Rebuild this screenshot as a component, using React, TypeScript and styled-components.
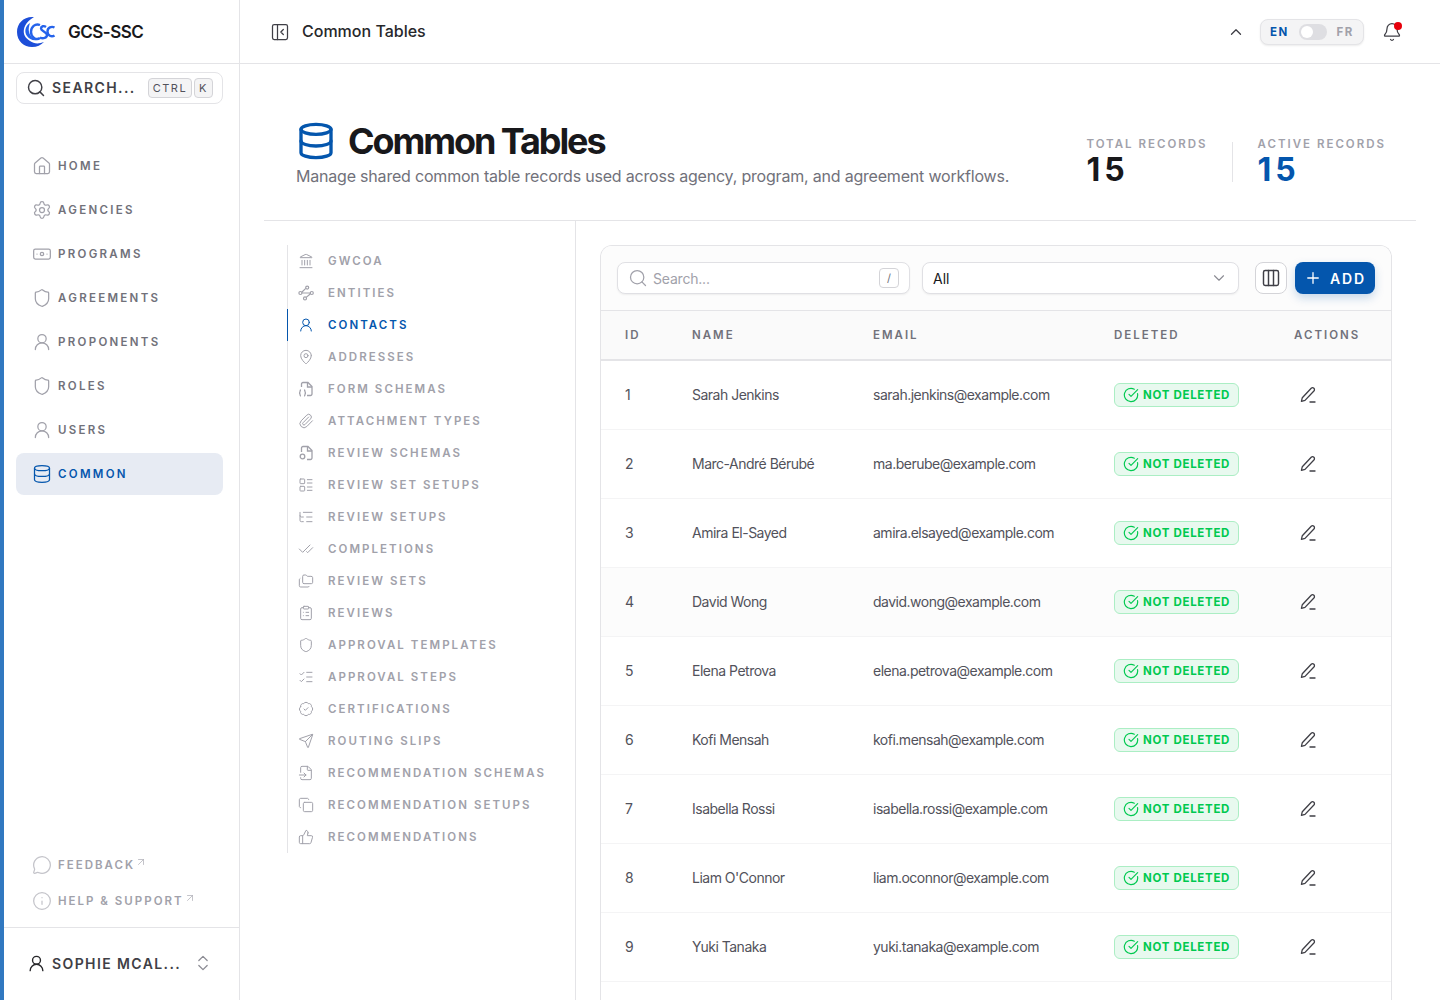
import React from "react";
import styled, { createGlobalStyle } from "styled-components";
import {
  Search,
  House,
  Settings,
  Banknote,
  Shield,
  UserRound,
  Database,
  MessageCircle,
  Info,
  ArrowUpRight,
  ChevronsUpDown,
  ChevronUp,
  ChevronDown,
  Bell,
  Landmark,
  MapPin,
  Paperclip,
  LayoutList,
  ListTree,
  CheckCheck,
  Folders,
  ClipboardList,
  ListChecks,
  BadgeCheck,
  Send,
  FileInput,
  Copy,
  ThumbsUp,
  Columns3,
  Plus,
  CircleCheckBig,
  PanelLeftClose,
} from "lucide-react";

const BLUE = "#0456ad";

const GlobalStyle = createGlobalStyle`
  html, body {
    margin: 0;
    padding: 0;
    height: 1000px;
    overflow: hidden;
    background: #fff;
    font-family: Inter, "Liberation Sans", sans-serif;
    color: #18181b;
  }
  * { box-sizing: border-box; }
`;

const Shell = styled.div`
  display: flex;
  width: 1440px;
  height: 1000px;
  overflow: hidden;
`;

const Sidebar = styled.aside`
  width: 240px;
  flex: none;
  height: 1000px;
  display: flex;
  flex-direction: column;
  border-left: 4px solid #3178c0;
  border-right: 1px solid #e4e4e7;
`;

const Brand = styled.div`
  height: 64px;
  flex: none;
  display: flex;
  align-items: center;
  gap: 12px;
  padding-left: 12px;
  border-bottom: 1px solid #e4e4e7;
`;

const BrandName = styled.span`
  font-size: 17px;
  font-weight: 600;
  letter-spacing: -0.5px;
  color: #18181b;
`;

const SearchBox = styled.div`
  margin: 8px 16px 0 12px;
  height: 32px;
  flex: none;
  display: flex;
  align-items: center;
  padding: 0 9px;
  border: 1px solid #e4e4e7;
  border-radius: 8px;
  color: #3f3f46;
`;

const SearchLabel = styled.span`
  margin: 0 0 2px 6px;
  flex: 1;
  font-size: 14px;
  font-weight: 600;
  letter-spacing: 1.4px;
  color: #3f3f46;
`;

const Kbd = styled.span`
  height: 20px;
  display: inline-flex;
  align-items: center;
  padding: 0 4px;
  margin-left: 2px;
  border: 1px solid #d4d4d8;
  border-radius: 4px;
  background: #f4f4f5;
  font-size: 11px;
  letter-spacing: 1.5px;
  color: #52525b;
`;

const Nav = styled.nav`
  margin: 41px 16px 0 12px;
  display: flex;
  flex-direction: column;
  gap: 2px;
`;

const NavItem = styled.div<{ $active?: boolean }>`
  height: 42px;
  display: flex;
  align-items: center;
  gap: 6px;
  padding-left: 16px;
  border-radius: 8px;
  background: ${(p) => (p.$active ? "#e7ebf3" : "transparent")};
  color: ${(p) => (p.$active ? BLUE : "#a1a1aa")};
`;

const NavLabel = styled.span<{ $active?: boolean }>`
  font-size: 11.5px;
  font-weight: 600;
  letter-spacing: 2.3px;
  color: ${(p) => (p.$active ? BLUE : "#71717a")};
`;

const SideFoot = styled.div`
  margin-top: auto;
  padding: 0 12px 10px 28px;
  display: flex;
  flex-direction: column;
  gap: 4px;
`;

const FootLink = styled.div`
  height: 32px;
  display: flex;
  align-items: center;
  gap: 6px;
  color: #c4c4ca;
`;

const FootLabel = styled.span`
  font-size: 11.5px;
  font-weight: 600;
  letter-spacing: 2px;
  color: #a1a1aa;
`;

const FootArrow = styled.span`
  display: inline-flex;
  margin: -6px 0 0 -6px;
  color: #a1a1aa;
`;

const UserRow = styled.div`
  height: 73px;
  flex: none;
  display: flex;
  align-items: center;
  padding: 0 0 2px 23px;
  border-top: 1px solid #e4e4e7;
  color: #27272a;
`;

const UserName = styled.span`
  margin-left: 6px;
  width: 141px;
  font-size: 14px;
  font-weight: 600;
  letter-spacing: 1.4px;
  white-space: nowrap;
  color: #3f3f46;
`;

const Main = styled.main`
  flex: 1;
  min-width: 0;
  height: 1000px;
  display: flex;
  flex-direction: column;
`;

const TopBar = styled.header`
  height: 64px;
  flex: none;
  display: flex;
  align-items: center;
  padding: 0 38px 0 30px;
  border-bottom: 1px solid #e4e4e7;
  color: #3f3f46;
`;

const TopTitle = styled.span`
  margin: 0 0 2px 12px;
  flex: 1;
  font-size: 16px;
  font-weight: 500;
  color: #27272a;
`;

const LangSwitch = styled.div`
  margin: 0 18px 0 15px;
  width: 104px;
  height: 26px;
  display: flex;
  align-items: center;
  justify-content: space-between;
  padding: 0 9px;
  border: 1px solid #e4e4e7;
  border-radius: 8px;
  background: #f4f4f5;
  box-shadow: 0 1px 2px rgba(0, 0, 0, 0.08);
`;

const LangText = styled.span<{ $on?: boolean }>`
  font-size: 11.5px;
  font-weight: 700;
  letter-spacing: 1.6px;
  color: ${(p) => (p.$on ? BLUE : "#a1a1aa")};
`;

const Track = styled.span`
  width: 28px;
  height: 16px;
  padding: 2px;
  border-radius: 8px;
  background: #dedee2;
  display: flex;
`;

const Knob = styled.span`
  width: 12px;
  height: 12px;
  border-radius: 50%;
  background: #fff;
`;

const BellWrap = styled.span`
  position: relative;
  display: inline-flex;
  color: #3f3f46;
`;

const BellDot = styled.span`
  position: absolute;
  top: 0;
  right: 0;
  width: 8px;
  height: 8px;
  border-radius: 50%;
  background: #e7000b;
`;

const Content = styled.div`
  flex: 1;
  min-height: 0;
  padding: 0 24px;
  display: flex;
  flex-direction: column;
`;

const PageHead = styled.section`
  height: 157px;
  flex: none;
  display: flex;
  align-items: center;
  justify-content: space-between;
  padding: 25px 30px 0 32px;
  border-bottom: 1px solid #e4e4e7;
`;

const TitleRow = styled.div`
  display: flex;
  align-items: center;
  gap: 12px;
  color: ${BLUE};
`;

const Title = styled.h1`
  margin: 0;
  font-size: 36px;
  line-height: 40px;
  font-weight: 700;
  letter-spacing: -2.1px;
  color: #18181b;
`;

const Subtitle = styled.p`
  margin: 3px 0 0;
  font-size: 16px;
  line-height: 24px;
  letter-spacing: -0.2px;
  color: #71717a;
`;

const Stats = styled.div`
  margin-top: 14px;
  display: flex;
  align-items: center;
`;

const StatDivider = styled.span`
  width: 1px;
  height: 40px;
  margin: 0 25px 0 24px;
  background: #e4e4e7;
`;

const StatLabel = styled.div`
  font-size: 11.5px;
  line-height: 14px;
  font-weight: 600;
  letter-spacing: 2px;
  color: #a1a1aa;
`;

const StatValue = styled.div<{ $blue?: boolean }>`
  margin-top: 3px;
  font-size: 32px;
  line-height: 32px;
  font-weight: 700;
  letter-spacing: 4px;
  color: ${(p) => (p.$blue ? BLUE : "#18181b")};
`;

const Body = styled.div`
  flex: 1;
  min-height: 0;
  display: flex;
`;

const SubCol = styled.div`
  width: 312px;
  flex: none;
  padding: 24px 0 0 23px;
  border-right: 1px solid #e4e4e7;
`;

const SubList = styled.div`
  border-left: 1px solid #e4e4e7;
  display: flex;
  flex-direction: column;
`;

const SubItem = styled.div<{ $active?: boolean }>`
  height: 32px;
  display: flex;
  align-items: center;
  gap: 14px;
  padding-left: 10px;
  margin-left: -1px;
  border-left: 1px solid ${(p) => (p.$active ? BLUE : "transparent")};
  color: ${(p) => (p.$active ? BLUE : "#a1a1aa")};
`;

const SubLabel = styled.span<{ $active?: boolean }>`
  font-size: 11.5px;
  font-weight: 600;
  letter-spacing: 2.05px;
  color: ${(p) => (p.$active ? BLUE : "#a1a1aa")};
`;

const TableArea = styled.div`
  flex: 1;
  min-width: 0;
  padding: 24px 24px 0 24px;
`;

const Card = styled.div`
  height: 800px;
  border: 1px solid #e4e4e7;
  border-bottom: none;
  border-radius: 12px 12px 0 0;
  overflow: hidden;
`;

const Toolbar = styled.div`
  height: 65px;
  display: flex;
  align-items: center;
  gap: 12px;
  padding: 0 16px;
  background: #fcfcfc;
  border-bottom: 1px solid #e4e4e7;
`;

const Field = styled.div`
  height: 32px;
  display: flex;
  align-items: center;
  padding: 0 10px;
  background: #fff;
  border: 1px solid #e0e0e4;
  border-radius: 8px;
  box-shadow: 0 1px 2px rgba(0, 0, 0, 0.06);
`;

const SearchField = styled(Field)`
  width: 293px;
  color: #a1a1aa;
`;

const Placeholder = styled.span`
  margin-left: 5px;
  flex: 1;
  font-size: 14px;
  letter-spacing: -0.2px;
  color: #a1a1aa;
`;

const SlashKey = styled.span`
  width: 20px;
  height: 20px;
  display: flex;
  align-items: center;
  justify-content: center;
  border: 1px solid #d4d4d8;
  border-radius: 4px;
  font-size: 11px;
  color: #71717a;
`;

const SelectField = styled(Field)`
  width: 317px;
  justify-content: space-between;
  font-size: 14px;
  color: #18181b;
  padding-right: 10px;
  svg {
    color: #8b8b93;
  }
`;

const ColumnsButton = styled.button`
  margin-left: 4px;
  width: 32px;
  height: 32px;
  display: flex;
  align-items: center;
  justify-content: center;
  padding: 0;
  background: #fff;
  border: 1px solid #d4d4d8;
  border-radius: 8px;
  color: #3f3f46;
`;

const AddButton = styled.button`
  margin-left: -4px;
  width: 80px;
  height: 32px;
  display: flex;
  align-items: center;
  justify-content: center;
  gap: 8px;
  padding: 0;
  border: none;
  border-radius: 8px;
  background: ${BLUE};
  color: #fff;
  font-family: inherit;
  font-size: 14px;
  font-weight: 600;
  letter-spacing: 1.8px;
  box-shadow: 0 4px 10px rgba(4, 86, 173, 0.22);
`;

const Table = styled.table`
  width: 100%;
  border-collapse: collapse;
  table-layout: fixed;
`;

const Th = styled.th<{ $w: number }>`
  width: ${(p) => p.$w}px;
  height: 49px;
  padding: 0 0 0 24px;
  text-align: left;
  background: #fafafa;
  border-bottom: 2px solid #e4e4e7;
  font-size: 11.5px;
  font-weight: 600;
  letter-spacing: 2px;
  color: #71717a;
`;

const Td = styled.td`
  height: 69px;
  padding: 0 0 0 24px;
  border-bottom: 1px solid #f4f4f5;
  font-size: 14px;
  letter-spacing: -0.5px;
  color: #52525b;
`;

const Row = styled.tr<{ $hover?: boolean }>`
  background: ${(p) => (p.$hover ? "#fcfcfc" : "#fff")};
`;

const Badge = styled.span`
  height: 24px;
  display: inline-flex;
  align-items: center;
  vertical-align: middle;
  gap: 4px;
  padding: 0 8px;
  border: 1px solid #abeec4;
  border-radius: 6px;
  background: #e8f9ef;
  font-size: 11.5px;
  font-weight: 700;
  letter-spacing: 0.7px;
  color: #00c950;
  white-space: nowrap;
`;

const EditCell = styled.span`
  display: flex;
  margin-left: 5px;
  color: #3f3f46;
`;

// small drawings that the icon package has no close match for
const EntitiesIcon = ({ size = 16 }: { size?: number; strokeWidth?: number }) => (
  <svg width={size} height={size} viewBox="0 0 16 16" fill="none" stroke="currentColor" strokeWidth={1.2}>
    <circle cx="2.4" cy="8" r="1.5" />
    <circle cx="9.2" cy="2.6" r="1.5" />
    <circle cx="7" cy="13.4" r="1.5" />
    <circle cx="13.8" cy="8" r="1.5" />
    <path d="M3.9 8h8.4M7.8 3.4 4 7M8.2 12.4 12.2 9" />
  </svg>
);

const FileBracesIcon = ({ size = 16 }: { size?: number; strokeWidth?: number }) => (
  <svg width={size} height={size} viewBox="0 0 16 16" fill="none" stroke="currentColor" strokeWidth={1.3}>
    <path d="M3.500 6V3A1.500 1.500 0 0 1 5 1.500h5L14 5.500V13a1.500 1.500 0 0 1-1.500 1.500H9" />
    <path d="M9.500 1.500V6H14" />
    <path d="M3 9c-1 0-1 .7-1 1.500S1.500 12 1 12c.5 0 1 .5 1 1.500S2 15 3 15M6 9c1 0 1 .7 1 1.500s.5 1.500 1 1.500c-.5 0-1 .5-1 1.500S7 15 6 15" />
  </svg>
);

const FileDotIcon = ({ size = 16 }: { size?: number; strokeWidth?: number }) => (
  <svg width={size} height={size} viewBox="0 0 16 16" fill="none" stroke="currentColor" strokeWidth={1.3}>
    <path d="M3.500 7V3A1.500 1.500 0 0 1 5 1.500h5L14 5.500V13a1.500 1.500 0 0 1-1.500 1.500H9" />
    <path d="M9.500 1.500V6H14" />
    <circle cx="4.500" cy="11.500" r="2.300" />
  </svg>
);

const EditIcon = () => (
  <svg width="18" height="18" viewBox="0 0 18 18" fill="none" stroke="currentColor" strokeWidth={1.3} strokeLinejoin="round" strokeLinecap="round">
    <path d="M12.200 2.300a1.900 1.900 0 0 1 2.700 2.700L6 14.400l-3.600 1 .9-3.700z" />
    <path d="M11 16h5" />
  </svg>
);

const navItems = [
  { label: "HOME", icon: House },
  { label: "AGENCIES", icon: Settings },
  { label: "PROGRAMS", icon: Banknote },
  { label: "AGREEMENTS", icon: Shield },
  { label: "PROPONENTS", icon: UserRound },
  { label: "ROLES", icon: Shield },
  { label: "USERS", icon: UserRound },
  { label: "COMMON", icon: Database, active: true },
];

const subItems = [
  { label: "GWCOA", icon: Landmark },
  { label: "ENTITIES", icon: EntitiesIcon },
  { label: "CONTACTS", icon: UserRound, active: true },
  { label: "ADDRESSES", icon: MapPin },
  { label: "FORM SCHEMAS", icon: FileBracesIcon },
  { label: "ATTACHMENT TYPES", icon: Paperclip },
  { label: "REVIEW SCHEMAS", icon: FileDotIcon },
  { label: "REVIEW SET SETUPS", icon: LayoutList },
  { label: "REVIEW SETUPS", icon: ListTree },
  { label: "COMPLETIONS", icon: CheckCheck },
  { label: "REVIEW SETS", icon: Folders },
  { label: "REVIEWS", icon: ClipboardList },
  { label: "APPROVAL TEMPLATES", icon: Shield },
  { label: "APPROVAL STEPS", icon: ListChecks },
  { label: "CERTIFICATIONS", icon: BadgeCheck },
  { label: "ROUTING SLIPS", icon: Send },
  { label: "RECOMMENDATION SCHEMAS", icon: FileInput },
  { label: "RECOMMENDATION SETUPS", icon: Copy },
  { label: "RECOMMENDATIONS", icon: ThumbsUp },
];

const contacts = [
  { id: 1, name: "Sarah Jenkins", email: "sarah.jenkins@example.com" },
  { id: 2, name: "Marc-André Bérubé", email: "ma.berube@example.com" },
  { id: 3, name: "Amira El-Sayed", email: "amira.elsayed@example.com" },
  { id: 4, name: "David Wong", email: "david.wong@example.com" },
  { id: 5, name: "Elena Petrova", email: "elena.petrova@example.com" },
  { id: 6, name: "Kofi Mensah", email: "kofi.mensah@example.com" },
  { id: 7, name: "Isabella Rossi", email: "isabella.rossi@example.com" },
  { id: 8, name: "Liam O'Connor", email: "liam.oconnor@example.com" },
  { id: 9, name: "Yuki Tanaka", email: "yuki.tanaka@example.com" },
];

const Logo = () => (
  <svg width="40" height="32" viewBox="0 0 40 32" fill="none">
    <path
      d="M18 1C8 0 1 7 1 16c0 9 7 15 15 15 5 0 9-2 12-5-5 2-10 2-14-1C9 22 7 18 8 13c1-5 5-9 10-12z"
      fill="#1d4ed8"
    />
    <path d="M14 7C9 10 8 16 11 20c2 3 6 5 10 4-4-1-7-4-8-8-.7-3 0-6 1-9z" fill="#2563eb" />
    <path d="M24 9c-5-2-9 2-9 7s5 9 9 6" stroke="#2563eb" strokeWidth="2.400" />
    <path d="M30 11c-2-1.500-5-1-5 1.500S31 16 31 19s-4 4-7 2.500" stroke="#2563eb" strokeWidth="2.400" />
    <path d="M38.500 11.500c-3-1.500-7 0-7 4s4 6 7 4" stroke="#2563eb" strokeWidth="2.400" />
  </svg>
);

const App = () => (
  <Shell>
    <GlobalStyle />
    <Sidebar>
      <Brand>
        <Logo />
        <BrandName>GCS-SSC</BrandName>
      </Brand>
      <SearchBox>
        <Search size={20} strokeWidth={1.75} />
        <SearchLabel>SEARCH...</SearchLabel>
        <Kbd>CTRL</Kbd>
        <Kbd>K</Kbd>
      </SearchBox>
      <Nav>
        {navItems.map((n) => (
          <NavItem key={n.label} $active={n.active}>
            <n.icon size={20} strokeWidth={1.5} />
            <NavLabel $active={n.active}>{n.label}</NavLabel>
          </NavItem>
        ))}
      </Nav>
      <SideFoot>
        <FootLink>
          <MessageCircle size={20} strokeWidth={1.5} />
          <FootLabel>FEEDBACK</FootLabel>
          <FootArrow>
            <ArrowUpRight size={12} strokeWidth={1.25} />
          </FootArrow>
        </FootLink>
        <FootLink>
          <Info size={20} strokeWidth={1.5} />
          <FootLabel>HELP &amp; SUPPORT</FootLabel>
          <FootArrow>
            <ArrowUpRight size={12} strokeWidth={1.25} />
          </FootArrow>
        </FootLink>
      </SideFoot>
      <UserRow>
        <UserRound size={19} strokeWidth={1.75} />
        <UserName>SOPHIE MCAL...</UserName>
        <ChevronsUpDown size={20} strokeWidth={1.5} color="#8b8b93" />
      </UserRow>
    </Sidebar>
    <Main>
      <TopBar>
        <PanelLeftClose size={20} strokeWidth={1.5} />
        <TopTitle>Common Tables</TopTitle>
        <ChevronUp size={18} strokeWidth={1.75} />
        <LangSwitch>
          <LangText $on>EN</LangText>
          <Track>
            <Knob />
          </Track>
          <LangText>FR</LangText>
        </LangSwitch>
        <BellWrap>
          <Bell size={20} strokeWidth={1.5} />
          <BellDot />
        </BellWrap>
      </TopBar>
      <Content>
        <PageHead>
          <div>
            <TitleRow>
              <Database size={40} strokeWidth={2} />
              <Title>Common Tables</Title>
            </TitleRow>
            <Subtitle>Manage shared common table records used across agency, program, and agreement workflows.</Subtitle>
          </div>
          <Stats>
            <div>
              <StatLabel>TOTAL RECORDS</StatLabel>
              <StatValue>15</StatValue>
            </div>
            <StatDivider />
            <div>
              <StatLabel>ACTIVE RECORDS</StatLabel>
              <StatValue $blue>15</StatValue>
            </div>
          </Stats>
        </PageHead>
        <Body>
          <SubCol>
            <SubList>
              {subItems.map((s) => (
                <SubItem key={s.label} $active={s.active}>
                  <s.icon size={16} strokeWidth={1.5} />
                  <SubLabel $active={s.active}>{s.label}</SubLabel>
                </SubItem>
              ))}
            </SubList>
          </SubCol>
          <TableArea>
            <Card>
              <Toolbar>
                <SearchField>
                  <Search size={20} strokeWidth={1.5} />
                  <Placeholder>Search...</Placeholder>
                  <SlashKey>/</SlashKey>
                </SearchField>
                <SelectField>
                  All
                  <ChevronDown size={18} strokeWidth={1.5} />
                </SelectField>
                <ColumnsButton>
                  <Columns3 size={20} strokeWidth={1.75} />
                </ColumnsButton>
                <AddButton>
                  <Plus size={18} strokeWidth={1.75} />
                  ADD
                </AddButton>
              </Toolbar>
              <Table>
                <thead>
                  <tr>
                    <Th $w={67}>ID</Th>
                    <Th $w={181}>NAME</Th>
                    <Th $w={241}>EMAIL</Th>
                    <Th $w={180}>DELETED</Th>
                    <Th $w={121}>ACTIONS</Th>
                  </tr>
                </thead>
                <tbody>
                  {contacts.map((c) => (
                    <Row key={c.id} $hover={c.id === 4}>
                      <Td>{c.id}</Td>
                      <Td>{c.name}</Td>
                      <Td>{c.email}</Td>
                      <Td>
                        <Badge>
                          <CircleCheckBig size={16} strokeWidth={1.75} />
                          NOT DELETED
                        </Badge>
                      </Td>
                      <Td>
                        <EditCell>
                          <EditIcon />
                        </EditCell>
                      </Td>
                    </Row>
                  ))}
                </tbody>
              </Table>
            </Card>
          </TableArea>
        </Body>
      </Content>
    </Main>
  </Shell>
);

export default App;
